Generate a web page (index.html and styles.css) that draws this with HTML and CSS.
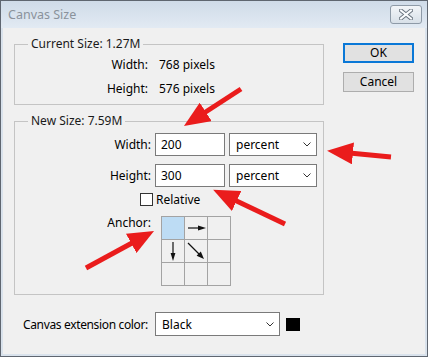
FILE: index.html
```html
<!DOCTYPE html>
<html lang="en">
<head>
	<meta charset="UTF-8">
	<meta name="viewport" content="width=device-width, initial-scale=1.0">
	<title>Canvas Size</title>
	<link rel="stylesheet" href="styles.css">
</head>
<body>

	<div class="window">
		<!-- title bar -->
		<div class="titlebar">
			<span class="title">Canvas Size</span>
			<div class="close-btn">
				<svg width="14" height="11" viewBox="0 0 14 11">
					<path d="M2 1.5 L12 9.5 M12 1.5 L2 9.5" stroke="#6b7580" stroke-width="4" stroke-linecap="square"/>
					<path d="M2 1.5 L12 9.5 M12 1.5 L2 9.5" stroke="#fafcfe" stroke-width="2" stroke-linecap="square"/>
				</svg>
			</div>
		</div>

		<div class="client">
			<div class="main-col">
				<fieldset class="group group-current">
					<legend>Current Size: 1.27M</legend>
					<div class="info-row"><span class="info-label">Width:</span><span>768 pixels</span></div>
					<div class="info-row"><span class="info-label">Height:</span><span>576 pixels</span></div>
				</fieldset>

				<fieldset class="group group-new">
					<legend>New Size: 7.59M</legend>
					<div class="field-row">
						<span class="field-label">Width:</span>
						<div class="text-box">200</div>
						<div class="select unit-select">
							<span>percent</span>
							<svg class="chevron" width="8" height="5" viewBox="0 0 8 5"><path d="M0.5 0.5 L4 4 L7.5 0.5" fill="none" stroke="#333" stroke-width="1"/></svg>
						</div>
					</div>
					<div class="field-row">
						<span class="field-label">Height:</span>
						<div class="text-box">300</div>
						<div class="select unit-select">
							<span>percent</span>
							<svg class="chevron" width="8" height="5" viewBox="0 0 8 5"><path d="M0.5 0.5 L4 4 L7.5 0.5" fill="none" stroke="#333" stroke-width="1"/></svg>
						</div>
					</div>
					<div class="check-row">
						<span class="checkbox"></span>
						<span>Relative</span>
					</div>
					<div class="anchor-row">
						<span class="field-label anchor-label">Anchor:</span>
						<div class="anchor-grid">
							<div class="cell selected"></div>
							<div class="cell">
								<svg width="22" height="22" viewBox="0 0 22 22"><path d="M3 11 H15" stroke="#111" stroke-width="1.2"/><path d="M13 8.6 L21 11 L13 13.4 Z" fill="#111"/></svg>
							</div>
							<div class="cell"></div>
							<div class="cell">
								<svg width="22" height="22" viewBox="0 0 22 22"><path d="M11 2 V15" stroke="#111" stroke-width="1.2"/><path d="M8.6 13 L11 21 L13.4 13 Z" fill="#111"/></svg>
							</div>
							<div class="cell">
								<svg width="22" height="22" viewBox="0 0 22 22"><path d="M3 3 L14 14" stroke="#111" stroke-width="1.2"/><path d="M11.6 15.8 L19 19 L15.8 11.6 Z" fill="#111"/></svg>
							</div>
							<div class="cell"></div>
							<div class="cell"></div>
							<div class="cell"></div>
							<div class="cell"></div>
						</div>
					</div>
				</fieldset>

				<div class="ext-row">
					<span class="ext-label">Canvas extension color:</span>
					<div class="select ext-select">
						<span>Black</span>
						<svg class="chevron" width="8" height="5" viewBox="0 0 8 5"><path d="M0.5 0.5 L4 4 L7.5 0.5" fill="none" stroke="#333" stroke-width="1"/></svg>
					</div>
					<span class="swatch"></span>
				</div>
			</div>

			<div class="button-col">
				<div class="btn btn-default">OK</div>
				<div class="btn">Cancel</div>
			</div>
		</div>

		<!-- red callout arrows drawn over the dialog -->
		<svg class="callouts" width="428" height="357" viewBox="0 0 428 357">
			<defs>
				<marker id="head" viewBox="0 0 26 22" refX="14" refY="11" markerWidth="26" markerHeight="22" markerUnits="userSpaceOnUse" orient="auto">
					<path d="M0 0 L26 11 L0 22 Z" fill="#ea1c1c"/>
				</marker>
			</defs>
			<line x1="241" y1="89" x2="194" y2="119.5" stroke="#ea1c1c" stroke-width="5" marker-end="url(#head)"/>
			<line x1="391" y1="157" x2="339" y2="152" stroke="#ea1c1c" stroke-width="5" marker-end="url(#head)"/>
			<line x1="285" y1="224" x2="224" y2="195" stroke="#ea1c1c" stroke-width="5" marker-end="url(#head)"/>
			<line x1="86" y1="268" x2="143.5" y2="236.7" stroke="#ea1c1c" stroke-width="5" marker-end="url(#head)"/>
		</svg>
	</div>

</body>
</html>
```

FILE: styles.css
```css
body {
	margin: 0;
	background: #f0f0f0;
	font-family: "Noto Sans", "Liberation Sans", sans-serif;
	font-size: 12px;
	color: #000;
}

.window {
	position: relative;
	width: 428px;
	height: 357px;
	box-sizing: border-box;
	padding: 1px;
	background: #d9e2ec;
	box-shadow: inset 0 0 0 1px #5f6670;
	display: flex;
	flex-direction: column;
}

.titlebar {
	height: 27px;
	display: flex;
	justify-content: space-between;
	align-items: flex-start;
	padding: 0 5px 0 7px;
	background: linear-gradient(#cfdbe8, #e2eaf3);
}

.title {
	color: #8a929b;
	line-height: 28px;
	font-size: 12.5px;
}

.close-btn {
	margin-top: 4px;
	width: 30px;
	height: 17px;
	border: 1px solid #8e9aa7;
	border-radius: 3px;
	background: linear-gradient(#f2f5f8, #d8e0e8);
	display: flex;
	justify-content: center;
	align-items: center;
}

.client {
	flex: 1;
	margin: 0 2px 2px 2px;
	background: #f0f0f0;
	padding: 8px 0 0 11px;
	display: flex;
	align-items: flex-start;
}

.main-col {
	width: 310px;
}

/* group boxes */
.group {
	margin: 0;
	padding: 0;
	min-width: 0;
	border: 1px solid #c4c4c4;
}

.group legend {
	margin-left: 13px;
	padding: 0 3px;
	line-height: 16px;
	color: #1a1a1a;
}

.group-current {
	padding: 1px 0 3px 0;
}

.info-row {
	display: flex;
	gap: 11px;
	line-height: 24px;
}

.info-label {
	width: 133px;
	text-align: right;
}

.group-new {
	margin-top: 8px;
	padding: 4px 0 8px 0;
}

.field-row {
	display: flex;
	align-items: center;
	gap: 4px;
	margin-bottom: 8px;
}

.field-label {
	width: 136px;
	text-align: right;
}

.text-box {
	width: 70px;
	height: 23px;
	box-sizing: border-box;
	border: 1px solid #7a7a7a;
	background: #fff;
	padding-left: 5px;
	line-height: 21px;
}

.select {
	height: 23px;
	box-sizing: border-box;
	border: 1px solid #7a7a7a;
	background: #fff;
	display: flex;
	justify-content: space-between;
	align-items: center;
	padding: 0 5px 0 6px;
}

.unit-select {
	width: 88px;
}

.check-row {
	display: flex;
	align-items: center;
	gap: 3px;
	height: 17px;
	padding-left: 125px;
	margin-top: -4px;
}

.checkbox {
	width: 13px;
	height: 13px;
	box-sizing: border-box;
	border: 1px solid #333;
	background: #fff;
}

.anchor-row {
	display: flex;
	align-items: flex-start;
	gap: 10px;
	margin-top: 8px;
}

.anchor-label {
	line-height: 14px;
}

.anchor-grid {
	display: grid;
	grid-template-columns: repeat(3, 22px);
	grid-auto-rows: 22px;
	gap: 1px;
	padding: 1px;
	background: #a3a3a3;
}

.cell {
	background: #f0f0f0;
}

.cell svg {
	display: block;
}

.cell.selected {
	background: #bddcf4;
}

/* bottom row */
.ext-row {
	display: flex;
	align-items: center;
	margin-top: 17px;
	padding-left: 9px;
}

.ext-label {
	flex: none;
	width: 132px;
	white-space: nowrap;
	letter-spacing: -0.35px;
}

.ext-select {
	flex: none;
	width: 125px;
	height: 24px;
}

.swatch {
	flex: none;
	width: 14px;
	height: 13px;
	margin-left: 6px;
	background: #000;
}

/* buttons */
.button-col {
	margin-left: 19px;
	margin-top: 7px;
	display: flex;
	flex-direction: column;
	gap: 9px;
}

.btn {
	width: 71px;
	height: 20px;
	box-sizing: border-box;
	border: 1px solid #adadad;
	background: #e1e1e1;
	text-align: center;
	line-height: 18px;
}

.btn-default {
	border: 2px solid #0a78d7;
	line-height: 16px;
}

.callouts {
	position: absolute;
	top: 0;
	left: 0;
	pointer-events: none;
}
```
